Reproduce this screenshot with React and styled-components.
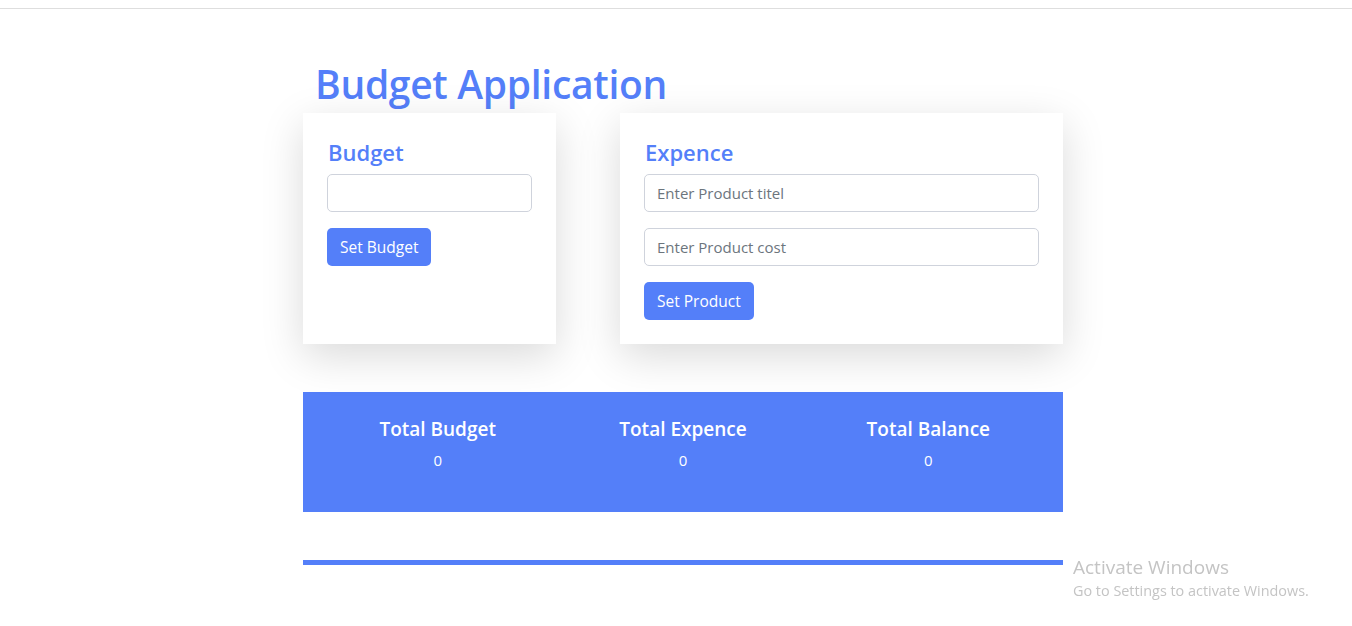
import styled, { createGlobalStyle } from 'styled-components';

const Global = createGlobalStyle`
  body {
    margin: 0;
    font-family: "Open Sans", "Noto Sans", sans-serif;
    background: #fff;
  }
  * { box-sizing: border-box; }
`

const blue = '#547ff9'

const TopRule = styled.div`
  margin-top: 8px;
  border-top: 1px solid #dedede;
`

const Main = styled.main`
  width: 760px;
  margin-left: calc(50% - 373px);
  padding-top: 47px;
`

const Title = styled.h1`
  margin: 0 0 0 12px;
  font-size: 39px;
  line-height: 55px;
  font-weight: 600;
  color: ${blue};
  letter-spacing: -0.3px;
`

const Row = styled.div`
  display: flex;
  gap: 64px;
  margin-top: 2px;
`

const Card = styled.section`
  width: ${p => p.$w}px;
  height: 231px;
  padding: 25px 24px 24px;
  background: #fff;
  box-shadow: 0 12px 40px rgba(0, 0, 0, 0.15);
  display: flex;
  flex-direction: column;
`

const CardTitle = styled.h2`
  margin: 0 0 7px 1px;
  font-size: 22px;
  line-height: 29px;
  font-weight: 600;
  color: ${blue};
`

const Input = styled.input`
  height: 38px;
  width: 100%;
  border: 1px solid #cfd3dc;
  border-radius: 5px;
  padding: 0 12px;
  font-family: inherit;
  font-size: 15px;
  color: #333;
  margin-bottom: 16px;
  &::placeholder { color: #6c757d; }
`

const Button = styled.button`
  align-self: flex-start;
  height: 38px;
  padding: 0 13px;
  border: none;
  border-radius: 5px;
  background: ${blue};
  color: #fff;
  font-family: inherit;
  font-size: 15.5px;
`

const Stats = styled.div`
  margin-top: 48px;
  height: 120px;
  background: ${blue};
  display: grid;
  grid-template-columns: repeat(3, 1fr);
  padding: 24px 12px 0;
`

const Stat = styled.div`
  text-align: center;
  color: #fff;
`

const StatLabel = styled.h3`
  margin: 0;
  font-size: 19px;
  line-height: 26px;
  font-weight: 600;
`

const StatValue = styled.div`
  margin-top: 8px;
  font-size: 15px;
  line-height: 20px;
`

const Line = styled.div`
  margin-top: 48px;
  height: 5px;
  background: ${blue};
`

const Watermark = styled.div`
  position: fixed;
  left: 1073px;
  top: 555px;
  color: #c4c4c4;
  font-family: "Open Sans", sans-serif;
  div:first-child { font-size: 19px; line-height: 25px; }
  div:last-child { font-size: 14.4px; line-height: 21px; }
`

export default function App() {
  return <>
    <Global/>
    <TopRule/>
    <Main>
      <Title>Budget Application</Title>
      <Row>
        <Card $w={253}>
          <CardTitle>Budget</CardTitle>
          <Input type="number"/>
          <Button>Set Budget</Button>
        </Card>
        <Card $w={443}>
          <CardTitle>Expence</CardTitle>
          <Input placeholder="Enter Product titel"/>
          <Input placeholder="Enter Product cost"/>
          <Button>Set Product</Button>
        </Card>
      </Row>
      <Stats>
        <Stat>
          <StatLabel>Total Budget</StatLabel>
          <StatValue>0</StatValue>
        </Stat>
        <Stat>
          <StatLabel>Total Expence</StatLabel>
          <StatValue>0</StatValue>
        </Stat>
        <Stat>
          <StatLabel>Total Balance</StatLabel>
          <StatValue>0</StatValue>
        </Stat>
      </Stats>
      <Line/>
    </Main>
    <Watermark>
      <div>Activate Windows</div>
      <div>Go to Settings to activate Windows.</div>
    </Watermark>
  </>
}
